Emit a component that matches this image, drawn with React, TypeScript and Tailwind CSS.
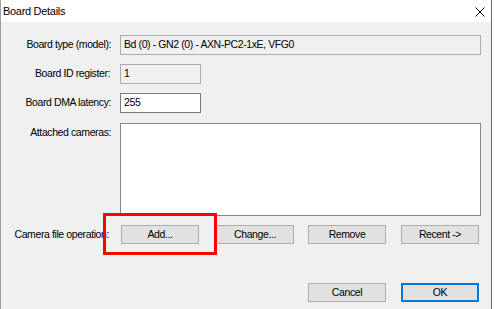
import React from "react";

const font = "font-['Liberation_Sans',Arial,sans-serif] text-[10.5px] tracking-[-0.4px] text-black";

function Btn({ label, className = "", def = false }: { label: string; className?: string; def?: boolean }) {
  return (
    <div
      className={
        "w-[78px] h-[19px] flex items-center justify-center bg-[#e1e1e1] leading-none " +
        (def ? "border-2 border-[#0078d7] " : "border border-[#adadad] ") +
        className
      }
    >
      {label}
    </div>
  );
}

export default function App() {
  return (
    <div className={"w-[495px] h-[309px] bg-white relative overflow-hidden " + font}>
      <div className="w-[492px] h-full border-l border-l-[#a0a0a0] border-r border-r-[#6a6a6a] flex flex-col">
        <div className="h-[22px] bg-white flex items-center justify-between pl-[2px] pr-[6px] shrink-0">
          <span className="text-[11px] tracking-[-0.3px]">Board Details</span>
          <svg width="10" height="10" viewBox="0 0 10 10" className="mt-[1px]">
            <path d="M0.5 0.5 L9.5 9.5 M9.5 0.5 L0.5 9.5" stroke="#000" strokeWidth="1" />
          </svg>
        </div>
        <div className="flex-1 bg-[#f0f0f0] relative pt-[13px]">
          <div className="grid grid-cols-[119px_1fr] pr-[10px] items-center">
            <div className="text-right pr-[9px]">Board type (model):</div>
            <div className="h-[20px] border border-[#adadad] bg-[#f0f0f0] flex items-center pl-[3px]">
              Bd (0) - GN2 (0) - AXN-PC2-1xE, VFG0
            </div>
          </div>
          <div className="grid grid-cols-[119px_1fr] pr-[10px] items-center mt-[9px]">
            <div className="text-right pr-[10px]">Board ID register:</div>
            <div className="w-[81px] h-[20px] border border-[#adadad] bg-[#f0f0f0] flex items-center pl-[3px]">1</div>
          </div>
          <div className="grid grid-cols-[119px_1fr] pr-[10px] items-center mt-[9px]">
            <div className="text-right pr-[9px]">Board DMA latency:</div>
            <div className="w-[81px] h-[20px] border border-[#7a7a7a] bg-white flex items-center pl-[3px]">255</div>
          </div>
          <div className="grid grid-cols-[119px_1fr] pr-[10px] items-start mt-[10px]">
            <div className="text-right pr-[9px] pt-[2px]">Attached cameras:</div>
            <div className="h-[93px] border border-[#828790] bg-white" />
          </div>
          <div className="grid grid-cols-[119px_1fr] items-center mt-[9px]">
            <div className="text-right pr-[11px] whitespace-nowrap">Camera file operation:</div>
            <div className="flex">
              <Btn label="Add..." className="ml-[1px]" />
              <Btn label="Change..." className="ml-[17px]" />
              <Btn label="Remove" className="ml-[14px]" />
              <Btn label="Recent ->" className="ml-[15px]" />
            </div>
          </div>
          <div className="flex justify-end pr-[12px] mt-[39px]">
            <Btn label="Cancel" />
            <Btn label="OK" def className="ml-[15px]" />
          </div>
          <div className="absolute left-[102px] top-[191px] w-[114px] h-[42px] border-[3px] border-[#ff0000]" />
        </div>
      </div>
    </div>
  );
}
